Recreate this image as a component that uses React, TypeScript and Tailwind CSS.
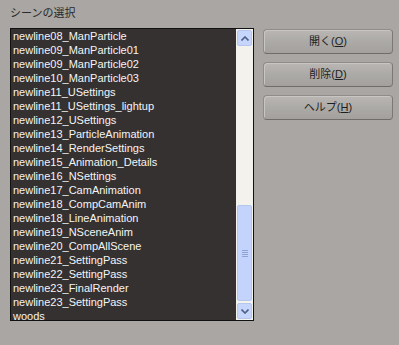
import React from "react";

const scenes = [
  "newline08_ManParticle",
  "newline09_ManParticle01",
  "newline09_ManParticle02",
  "newline10_ManParticle03",
  "newline11_USettings",
  "newline11_USettings_lightup",
  "newline12_USettings",
  "newline13_ParticleAnimation",
  "newline14_RenderSettings",
  "newline15_Animation_Details",
  "newline16_NSettings",
  "newline17_CamAnimation",
  "newline18_CompCamAnim",
  "newline18_LineAnimation",
  "newline19_NSceneAnim",
  "newline20_CompAllScene",
  "newline21_SettingPass",
  "newline22_SettingPass",
  "newline23_FinalRender",
  "newline23_SettingPass",
  "woods",
];

const font = { fontFamily: '"Liberation Sans", "Noto Sans CJK JP", sans-serif' };

function Btn({ label, mn }: { label: string; mn: string }) {
  return (
    <button className="h-[25px] w-[130px] rounded-[4px] border border-[#8f8c89] border-b-[#6f6c69] border-r-[#7a7774] bg-gradient-to-b from-[#b9b6b3] via-[#acaaa7] to-[#a3a09d] text-[11px] leading-none text-[#1e1e1e] shadow-[inset_1px_1px_0_#c8c5c2]">
      {label}(<span className="underline">{mn}</span>)
    </button>
  );
}

export default function App() {
  return (
    <div className="w-[399px] h-[345px] bg-[#a9a6a3] pl-[10px] pt-[6px] flex flex-col" style={font}>
      <div className="text-[11px] leading-[14px] text-[#2a2a2a] h-[22px]">シーンの選択</div>
      <div className="flex gap-[9px]">
        <div className="w-[244px] h-[293px] border border-[#111] bg-[#353131] flex">
          <ul className="flex-1 pl-[2px] overflow-hidden">
            {scenes.map((s) => (
              <li key={s} className="h-[14px] text-[11px] leading-[14px] text-[#f4f4f4] whitespace-nowrap">{s}</li>
            ))}
          </ul>
          <div className="w-[17px] bg-[#f4f2ec] flex flex-col items-center py-[1px]">
            <div className="w-[15px] h-[16px] rounded-[2px] border border-[#b4c5ee] bg-[#c6d5fb] flex items-center justify-center">
              <svg width="8" height="5" viewBox="0 0 8 5"><path d="M0.5 4.5 L4 1 L7.5 4.5" stroke="#4d6185" strokeWidth="1.6" fill="none" /></svg>
            </div>
            <div className="flex-1 w-full flex flex-col justify-end pb-[2px]">
              <div className="w-[15px] mx-auto h-[96px] rounded-[2px] border border-[#b4c5ee] bg-[#c4d3fc] flex flex-col items-center justify-center gap-[1px]">
                <div className="w-[6px] h-px bg-[#8ea3d6]" />
                <div className="w-[6px] h-px bg-[#8ea3d6]" />
                <div className="w-[6px] h-px bg-[#8ea3d6]" />
                <div className="w-[6px] h-px bg-[#8ea3d6]" />
              </div>
            </div>
            <div className="w-[15px] h-[16px] rounded-[2px] border border-[#b4c5ee] bg-[#c6d5fb] flex items-center justify-center">
              <svg width="8" height="5" viewBox="0 0 8 5"><path d="M0.5 0.5 L4 4 L7.5 0.5" stroke="#4d6185" strokeWidth="1.6" fill="none" /></svg>
            </div>
          </div>
        </div>
        <div className="flex flex-col gap-[8px] pt-[1px]">
          <Btn label="開く" mn="O" />
          <Btn label="削除" mn="D" />
          <Btn label="ヘルプ" mn="H" />
        </div>
      </div>
    </div>
  );
}
